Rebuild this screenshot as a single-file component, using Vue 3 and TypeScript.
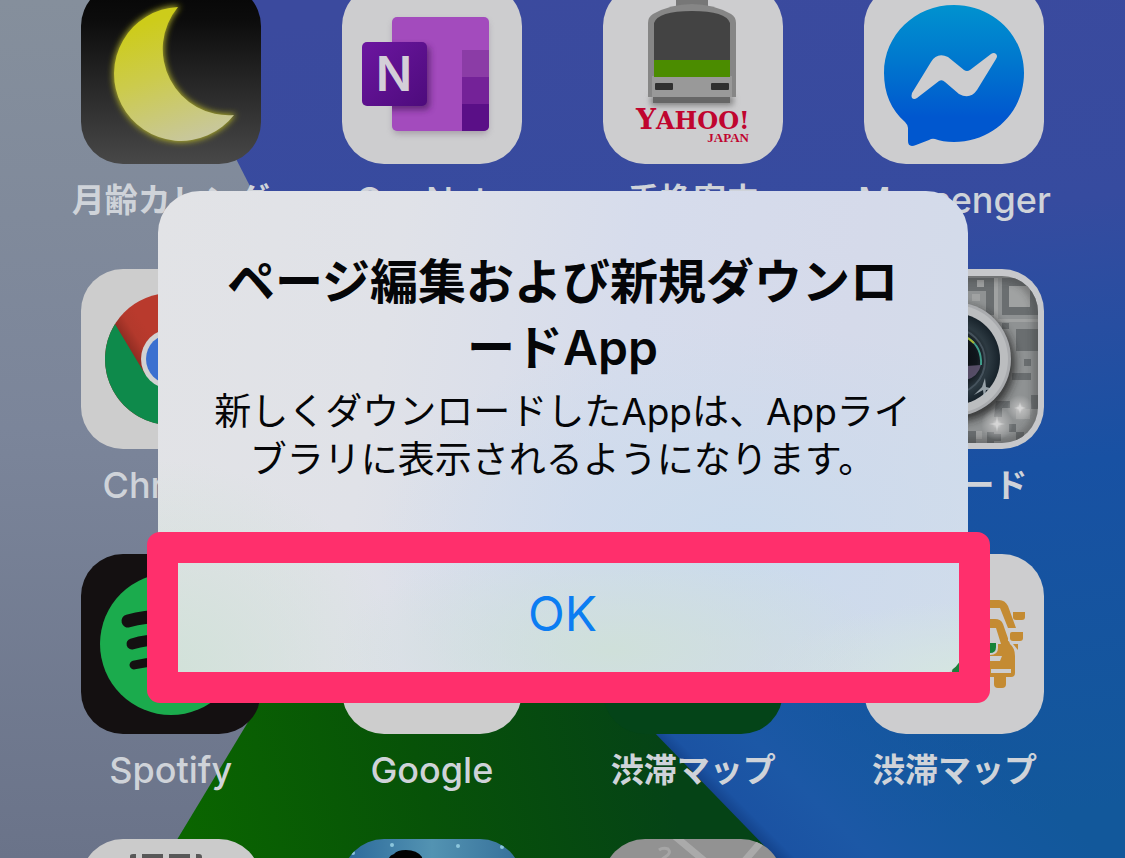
<script setup lang="ts">
interface HomeApp {
  id: string
  label: string
  script: 'latin' | 'ja'
}

const apps: HomeApp[] = [
  { id: 'moon', label: '月齢カレンダ', script: 'ja' },
  { id: 'onenote', label: 'OneNote', script: 'latin' },
  { id: 'transit', label: '乗換案内', script: 'ja' },
  { id: 'messenger', label: 'Messenger', script: 'latin' },
  { id: 'chrome', label: 'Chrome', script: 'latin' },
  { id: 'blank-a', label: '', script: 'latin' },
  { id: 'blank-b', label: '', script: 'latin' },
  { id: 'qr', label: 'QRコード', script: 'ja' },
  { id: 'spotify', label: 'Spotify', script: 'latin' },
  { id: 'google', label: 'Google', script: 'latin' },
  { id: 'traffic-green', label: '渋滞マップ', script: 'ja' },
  { id: 'traffic', label: '渋滞マップ', script: 'ja' },
  { id: 'calendar', label: '', script: 'latin' },
  { id: 'night', label: '', script: 'latin' },
  { id: 'map', label: '', script: 'latin' },
]
</script>

<template>
  <main class="screen">
    <svg class="wallpaper" viewBox="0 0 1125 858" preserveAspectRatio="xMidYMid slice" aria-hidden="true">
      <defs>
        <linearGradient id="w-blue" x1="0.45" y1="0" x2="0.6" y2="1">
          <stop offset="0" stop-color="#3b4a9e" />
          <stop offset="0.3" stop-color="#364b9f" />
          <stop offset="0.6" stop-color="#1851a3" />
          <stop offset="1" stop-color="#12589b" />
        </linearGradient>
        <linearGradient id="w-grey" x1="0" y1="0" x2="0" y2="1">
          <stop offset="0" stop-color="#858f9c" />
          <stop offset="0.5" stop-color="#7b859a" />
          <stop offset="1" stop-color="#6a7389" />
        </linearGradient>
        <linearGradient id="w-green" gradientUnits="userSpaceOnUse" x1="190" y1="850" x2="660" y2="740">
          <stop offset="0" stop-color="#0a6500" />
          <stop offset="0.5" stop-color="#075208" />
          <stop offset="1" stop-color="#054316" />
        </linearGradient>
        <linearGradient id="w-shade" gradientUnits="userSpaceOnUse" x1="702" y1="788" x2="870" y2="620">
          <stop offset="0" stop-color="#123f86" />
          <stop offset="0.07" stop-color="#1b53a3" />
          <stop offset="0.3" stop-color="#1c58a6" />
          <stop offset="1" stop-color="#1558a3" stop-opacity="0" />
        </linearGradient>
      </defs>
      <rect width="1125" height="858" fill="url(#w-blue)" />
      <path d="M560 640 L1125 640 L1125 858 L775 858 Z" fill="url(#w-shade)" />
      <path d="M0 0 H155 L400 480 L166 858 H0 Z" fill="url(#w-grey)" />
      <path d="M400 470 L776 858 H166 Z" fill="url(#w-green)" />
    </svg>

    <section class="grid">
      <article v-for="app in apps" :key="app.id" class="app">
        <svg class="icon" viewBox="0 0 180 180" aria-hidden="true">
          <g v-if="app.id === 'moon'">
            <defs>
              <linearGradient id="m-bg" x1="0" y1="0" x2="0" y2="1">
                <stop offset="0" stop-color="#050505" />
                <stop offset="0.2" stop-color="#0c0c0c" />
                <stop offset="1" stop-color="#484848" />
              </linearGradient>
              <linearGradient id="m-fg" x1="0.3" y1="0" x2="0.6" y2="1">
                <stop offset="0.1" stop-color="#cdcc1a" />
                <stop offset="0.5" stop-color="#cccb4c" />
                <stop offset="1" stop-color="#c8c79c" />
              </linearGradient>
              <filter id="m-glow" x="-20%" y="-20%" width="140%" height="140%">
                <feGaussianBlur stdDeviation="3" />
              </filter>
            </defs>
            <rect width="180" height="180" fill="url(#m-bg)" />
            <path d="M97 23 A67 67 0 1 0 153 131 A66 66 0 0 1 97 23 Z" fill="#b5b428" stroke="#b5b428" stroke-width="2" filter="url(#m-glow)" />
            <path d="M97 23 A67 67 0 1 0 153 131 A66 66 0 0 1 97 23 Z" fill="url(#m-fg)" />
          </g>

          <g v-else-if="app.id === 'onenote'">
            <defs>
              <linearGradient id="n-sq" x1="0" y1="0" x2="1" y2="1">
                <stop offset="0" stop-color="#6c16a0" />
                <stop offset="1" stop-color="#4d0b7c" />
              </linearGradient>
              <filter id="n-sh" x="-30%" y="-30%" width="160%" height="160%">
                <feGaussianBlur stdDeviation="3" />
              </filter>
              <clipPath id="n-page"><rect x="50" y="33" width="97" height="114" rx="5" /></clipPath>
            </defs>
            <rect width="180" height="180" fill="#cdcdcf" />
            <rect x="51" y="37" width="95" height="113" rx="5" fill="#8d8190" opacity="0.6" filter="url(#n-sh)" />
            <g clip-path="url(#n-page)">
              <rect x="50" y="33" width="97" height="114" fill="#a34bbd" />
              <rect x="120" y="66" width="27" height="27" fill="#8b3ca6" />
              <rect x="120" y="93" width="27" height="27" fill="#742298" />
              <rect x="120" y="120" width="27" height="27" fill="#5a0f87" />
              <rect x="24" y="62" width="64" height="64" rx="5" fill="#4c1a60" opacity="0.7" filter="url(#n-sh)" />
            </g>
            <rect x="20" y="58" width="65" height="64" rx="5" fill="url(#n-sq)" />
            <text class="n-letter" x="52" y="107" text-anchor="middle">N</text>
          </g>

          <g v-else-if="app.id === 'transit'">
            <defs>
              <filter id="t-sh" x="-30%" y="-100%" width="160%" height="300%">
                <feGaussianBlur stdDeviation="3" />
              </filter>
            </defs>
            <rect width="180" height="180" fill="#cdcdcf" />
            <rect x="48" y="112" width="82" height="9" fill="#777" filter="url(#t-sh)" />
            <rect x="73" y="10" width="32" height="14" fill="#777" />
            <rect x="50" y="110" width="77" height="9" fill="#666" />
            <path d="M45 113 V39 Q45 33 50 30 Q68 20 89 20 Q110 20 128 30 Q133 33 133 39 V113 Z" fill="#868686" />
            <rect x="49" y="92" width="80" height="21" fill="#999" />
            <path d="M51 77 V39 Q55 27 89 27 Q123 27 127 39 V77 Z" fill="#434343" />
            <rect x="51" y="76" width="76" height="17" fill="#4b8c00" />
            <rect x="52" y="99" width="18" height="7" rx="1" fill="#303030" />
            <rect x="108" y="99" width="18" height="7" rx="1" fill="#303030" />
            <text class="brand" x="33" y="145"><tspan class="brand-initial">Y</tspan>AHOO!</text>
            <text class="brand-sub" x="146" y="158" text-anchor="end">JAPAN</text>
          </g>

          <g v-else-if="app.id === 'messenger'">
            <defs>
              <linearGradient id="f-bg" x1="0" y1="0" x2="0" y2="1">
                <stop offset="0" stop-color="#0092cf" />
                <stop offset="0.4" stop-color="#0077ce" />
                <stop offset="0.8" stop-color="#0057cf" />
              </linearGradient>
            </defs>
            <rect width="180" height="180" fill="#cdcdcf" />
            <path
              d="M90 21 C129 21 160 51 160 89 C160 128 129 158 90 158 C82 158 76 157 71 155 Q68 154 65 156 L52 161 Q44 164 44 157 V144 Q44 141 41 138 C27 126 20 109 20 89 C20 51 51 21 90 21 Z"
              fill="url(#f-bg)"
            />
            <path
              d="M48 109 L67 78 Q73 68 84 73 L100 86 Q103 88 106 86 L127 70 Q130 68 132 70 Q134 72 132 75 L113 106 Q106 116 95 110 L81 98 Q78 95 75 97 L53 114 Q50 116 48 114 Q47 112 48 109 Z"
              fill="#cdcdcf"
            />
          </g>

          <g v-else-if="app.id === 'chrome'">
            <defs>
              <linearGradient id="c-red" gradientUnits="userSpaceOnUse" x1="48" y1="80" x2="70" y2="66">
                <stop offset="0" stop-color="#8f2c22" />
                <stop offset="0.5" stop-color="#b3392c" />
                <stop offset="1" stop-color="#b93a2d" />
              </linearGradient>
            </defs>
            <rect width="180" height="180" fill="#cdcdcd" />
            <circle cx="90" cy="90" r="66" fill="url(#c-red)" />
            <path d="M34 55 L64 105 L90 120 L90 156 A66 66 0 0 1 34 55 Z" fill="#0e8a4b" />
            <circle cx="90" cy="90" r="30" fill="#d2d2d2" />
            <circle cx="90" cy="90" r="25" fill="#3b70d0" />
          </g>

          <g v-else-if="app.id === 'qr'">
            <defs>
              <filter id="q-sh" x="-20%" y="-20%" width="140%" height="140%">
                <feGaussianBlur stdDeviation="4" />
              </filter>
              <radialGradient id="q-lens">
                <stop offset="0" stop-color="#08090d" />
                <stop offset="0.5" stop-color="#10161c" />
                <stop offset="0.75" stop-color="#2d3a42" />
                <stop offset="1" stop-color="#17222a" />
              </radialGradient>
              <radialGradient id="q-star">
                <stop offset="0" stop-color="#e8e8e8" />
                <stop offset="0.3" stop-color="#c8c8c8" stop-opacity="0.6" />
                <stop offset="1" stop-color="#c8c8c8" stop-opacity="0" />
              </radialGradient>
              <clipPath id="q-in"><rect x="6" y="7" width="168" height="167" rx="36" /></clipPath>
            </defs>
            <rect width="180" height="180" fill="#c7c8cb" />
            <g clip-path="url(#q-in)">
              <rect width="180" height="180" fill="#8f9293" />
              <path
                d="M138 9 H180 V46 H138 Z M104 9 H130 V46 H122 V22 H104 Z M138 54 H145 V60 H138 Z M152 60 H159 V82 H152 Z M159 60 H174 V68 H167 V82 H159 Z M167 68 H180 V82 H167 Z M160 90 H167 V97 H160 Z M148 104 H167 V111 H148 Z M132 132 H146 V139 H138 V148 H130 Z M167 126 H180 V140 H167 Z M104 162 H112 V174 H104 Z M123 163 H130 V174 H123 Z M145 155 H152 V163 H145 Z M130 165 H137 V172 H130 Z M152 163 H160 V174 H152 Z"
                fill="#6a6e70"
              />
              <path d="M145 17 H166 V38 H145 Z M113 11 H120 V18 H113 Z M108 25 H116 V32 H108 Z M130 9 H134 V50 H174 V53 H130 Z M152 140 H166 V150 H152 Z M112 162 H118 V170 H112 Z" fill="#a0a2a2" />
              <rect x="6" y="7" width="168" height="167" rx="36" fill="none" stroke="#333" stroke-width="6" opacity="0.6" filter="url(#q-sh)" />
              <circle cx="93" cy="95" r="58" fill="#222" opacity="0.8" filter="url(#q-sh)" />
              <circle cx="133" cy="155" r="16" fill="url(#q-star)" />
              <circle cx="156" cy="139" r="13" fill="url(#q-star)" />
              <path d="M133 147 L134 154 L141 155 L134 156 L133 163 L132 156 L125 155 L132 154 Z M156 133 L157 138 L162 139 L157 140 L156 145 L155 140 L150 139 L155 138 Z" fill="#d6d6d6" />
            </g>
            <circle cx="90" cy="90" r="57" fill="#a9abae" />
            <circle cx="90" cy="90" r="54" fill="#bbbdbf" />
            <circle cx="90" cy="90" r="46" fill="url(#q-lens)" />
            <circle cx="88" cy="92" r="33" fill="none" stroke="#45525c" stroke-width="2" />
            <path d="M104 69 Q118 78 117 96" fill="none" stroke="#3f9c8a" stroke-width="2" />
            <path d="M104 69 L110 74" stroke="#a8b432" stroke-width="2" />
            <path d="M117 96 Q114 108 102 111 V97 Z" fill="#665a78" opacity="0.8" />
            <path d="M121 109 L122 118 L130 120 L122 121 L120 130 L119 121 L110 126 L118 118 Z" fill="#b4bec4" opacity="0.8" />
          </g>

          <g v-else-if="app.id === 'spotify'">
            <rect width="180" height="180" fill="#141011" />
            <circle cx="90" cy="90" r="71" fill="#1bab4d" />
            <g fill="none" stroke="#141011" stroke-linecap="round">
              <path d="M47 67 Q94 54 136 76" stroke-width="13" />
              <path d="M51 90 Q92 78 128 99" stroke-width="11" />
              <path d="M53 111 Q90 102 120 120" stroke-width="9" />
            </g>
          </g>

          <g v-else-if="app.id === 'traffic'">
            <rect width="180" height="180" fill="#cdcdcf" />
            <circle cx="101" cy="118" r="13" fill="#1c7f3b" />
            <path d="M110 46 H135 Q141 46 144 52 L152 74 H144 L136 54 H110 Z" fill="#c48b33" />
            <path d="M110 65 H131 Q137 65 139 70 L146 90 Q151 94 151 102 V119 Q151 123 147 123 H110 Z" fill="#c48b33" />
            <path d="M110 74 H132 L137 90 H110 Z" fill="#cdcdcf" />
            <path d="M149 58 H161 V63 Q161 66 158 66 H152 Q149 66 149 63 Z" fill="#c48b33" />
            <path d="M144 79 Q144 76 147 76 H161 V89 H150 L144 87 Z" fill="#cdcdcf" />
            <path d="M146 80 Q146 78 148 78 H159 V84 Q159 87 156 87 H149 Q146 87 146 84 Z" fill="#c48b33" />
            <path d="M149 90 H154 V96 Z" fill="#c48b33" />
            <path d="M130 123 H142 V130 Q142 134 138 134 H134 Q130 134 130 130 Z" fill="#c48b33" />
            <path d="M110 87 H134 V94 Q134 101 126 101 H110 Z" fill="#cdcdcf" />
            <path d="M110 89 H132 V93 Q132 99 126 99 H110 Z" fill="#158339" />
            <path d="M110 102 H138 L136 107 H110 Z M127 115 H147 V119 H127 Z" fill="#cdcdcf" />
          </g>

          <rect v-else-if="app.id === 'traffic-green'" width="180" height="180" fill="#044418" />

          <g v-else-if="app.id === 'calendar'">
            <rect width="180" height="180" fill="#cbcbcb" />
            <path d="M49 17 Q49 15 52 15 H55 V30 H49 Z M61 15 H82 V30 H61 Z M88 15 H109 V30 H88 Z M115 15 H118 Q121 15 121 18 V30 H115 Z" fill="#585858" />
          </g>

          <g v-else-if="app.id === 'night'">
            <defs>
              <linearGradient id="s-bg">
                <stop offset="0" stop-color="#2a689a" />
                <stop offset="0.5" stop-color="#5393b2" />
                <stop offset="1" stop-color="#356f99" />
              </linearGradient>
            </defs>
            <rect width="180" height="180" fill="url(#s-bg)" />
            <path d="M46 26 Q45 17 52 15 Q55 11 64 11 Q75 11 80 18 L81 26 Z" fill="#020303" />
            <g fill="#8cc6dc">
              <circle cx="50" cy="6" r="2" />
              <circle cx="116" cy="7" r="2" />
              <circle cx="160" cy="8" r="2" />
              <circle cx="11" cy="14" r="2" />
            </g>
          </g>

          <g v-else-if="app.id === 'map'">
            <rect width="180" height="180" fill="#929292" />
            <path d="M68 -6 L104 24 M164 -4 L138 26" fill="none" stroke="#aaa" stroke-width="7" />
            <path d="M56 11 Q60 8 65 10 Q69 14 62 18 L58 21" fill="none" stroke="#a6a6a6" stroke-width="3" />
          </g>

          <rect v-else width="180" height="180" fill="#cdcdcd" />
        </svg>
        <span class="label" :class="app.script">{{ app.label }}</span>
      </article>
    </section>

    <section class="alert" role="alertdialog" aria-labelledby="alert-title" aria-describedby="alert-text">
      <div class="message">
        <h1 id="alert-title">ページ編集および新規ダウンロ<br />ードApp</h1>
        <p id="alert-text">新しくダウンロードしたAppは、Appライ<br />ブラリに表示されるようになります。</p>
      </div>
      <div class="actions">
        <button type="button" class="ok">OK</button>
        <span class="highlight" aria-hidden="true"></span>
      </div>
    </section>
  </main>
</template>

<style>
body {
  margin: 0;
}
</style>

<style scoped>
.screen {
  position: relative;
  display: flex;
  justify-content: center;
  align-items: flex-start;
  height: 100vh;
  overflow: hidden;
  background: #2a4d9f;
  font-family: Inter, 'Noto Sans CJK JP', sans-serif;
}

.wallpaper {
  position: absolute;
  inset: 0;
  width: 100%;
  height: 100%;
}

.grid {
  position: absolute;
  inset: -16px 0 auto;
  display: grid;
  grid-template-columns: repeat(4, 1fr);
  row-gap: 48px;
  padding: 0 40px;
}

.app {
  display: flex;
  flex-direction: column;
  align-items: center;
  gap: 15px;
}

.icon {
  width: 180px;
  height: 180px;
  border-radius: 42px;
}

.label {
  height: 42px;
  line-height: 42px;
  color: #cfd3d9;
  white-space: nowrap;
}

.latin {
  font-size: 36px;
  font-weight: 500;
}

.ja {
  font-size: 33px;
  font-weight: 600;
}

.n-letter {
  fill: #d4cfd8;
  font-size: 48px;
  font-weight: 600;
}

.brand {
  fill: #c0052f;
  font-family: 'DejaVu Serif', serif;
  font-size: 24px;
  font-weight: 700;
}

.brand-initial {
  font-size: 28px;
}

.brand-sub {
  fill: #c0052f;
  font-family: 'Liberation Serif', serif;
  font-size: 13px;
  font-weight: 700;
}

.alert {
  position: relative;
  width: 72%;
  min-width: 740px;
  margin-top: 191px;
  border-radius: 42px;
  background:
    radial-gradient(ellipse 30% 45% at 0% 100%, #d0e1d8 0%, rgba(208, 225, 216, 0) 100%),
    radial-gradient(ellipse 34% 22% at 56% 94%, #cfe0da 0%, rgba(207, 224, 218, 0) 100%),
    radial-gradient(ellipse 25% 16% at 100% 100%, #d5e6e0 0%, rgba(213, 230, 224, 0) 100%),
    radial-gradient(ellipse 45% 45% at 72% 72%, #cadbed 0%, rgba(202, 219, 237, 0) 100%),
    linear-gradient(100deg, #e2e3e6 0%, #e0e2e8 28%, #d6dcec 55%, #d5daea 80%, #d2dcea 100%);
}

.message {
  padding: 58px 40px 63px;
  color: #050608;
  text-align: center;
}

h1 {
  margin: 0 0 7px;
  font-size: 48px;
  font-weight: 600;
  line-height: 66px;
  white-space: nowrap;
}

p {
  margin: 0;
  font-size: 37px;
  line-height: 48px;
  white-space: nowrap;
}

.actions {
  position: relative;
}

.ok {
  display: block;
  width: 100%;
  height: 132px;
  padding: 0;
  border: 0;
  border-top: 1px solid #b4bac4;
  background: transparent;
  color: #0c7df2;
  font-family: inherit;
  font-size: 48px;
  cursor: pointer;
}

.highlight {
  position: absolute;
  inset: -15px -22px -24px -11px;
  border: 31px solid #ff2f6c;
  border-radius: 13px;
  pointer-events: none;
}
</style>
